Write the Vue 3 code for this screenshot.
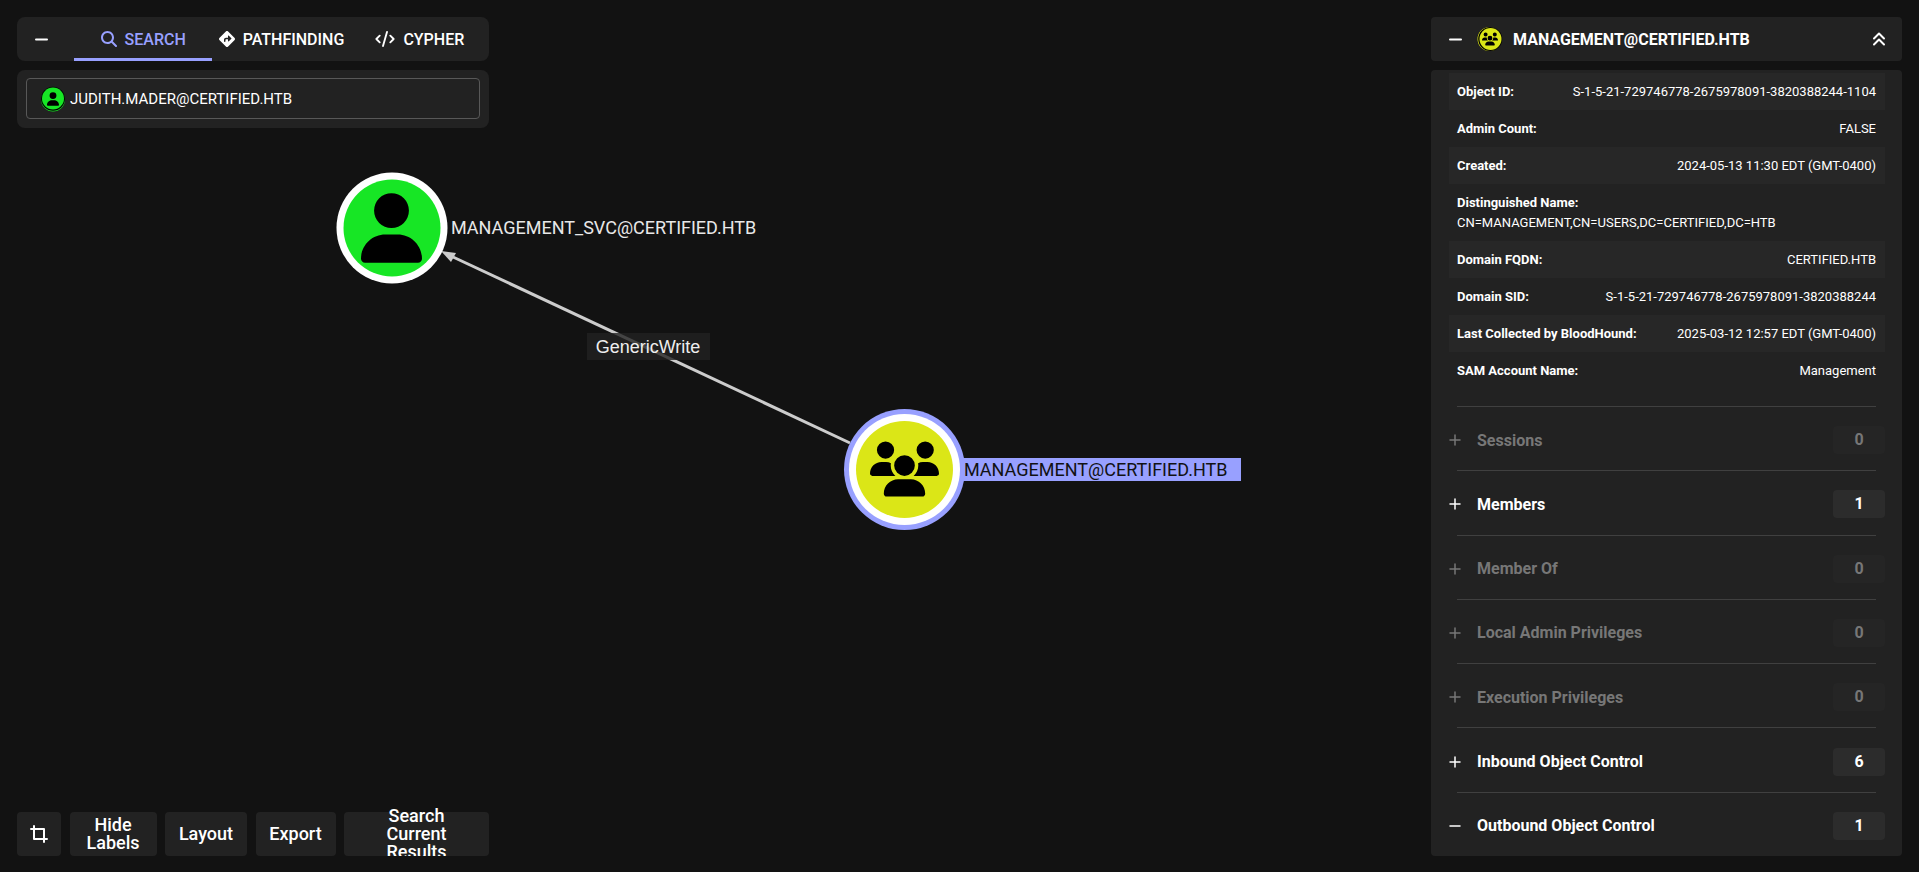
<script setup>
import { ref } from 'vue'

const principal = ref('JUDITH.MADER@CERTIFIED.HTB')

const properties = [
  { label: 'Object ID:', value: 'S-1-5-21-729746778-2675978091-3820388244-1104' },
  { label: 'Admin Count:', value: 'FALSE' },
  { label: 'Created:', value: '2024-05-13 11:30 EDT (GMT-0400)' },
  { label: 'Distinguished Name:', value: 'CN=MANAGEMENT,CN=USERS,DC=CERTIFIED,DC=HTB', wide: true },
  { label: 'Domain FQDN:', value: 'CERTIFIED.HTB' },
  { label: 'Domain SID:', value: 'S-1-5-21-729746778-2675978091-3820388244' },
  { label: 'Last Collected by BloodHound:', value: '2025-03-12 12:57 EDT (GMT-0400)' },
  { label: 'SAM Account Name:', value: 'Management' },
]

const sections = ref([
  { name: 'Sessions', count: 0, open: false },
  { name: 'Members', count: 1, open: false },
  { name: 'Member Of', count: 0, open: false },
  { name: 'Local Admin Privileges', count: 0, open: false },
  { name: 'Execution Privileges', count: 0, open: false },
  { name: 'Inbound Object Control', count: 6, open: false },
  { name: 'Outbound Object Control', count: 1, open: true },
])
</script>

<template>
  <div class="explore">
    <svg class="graph" role="img" aria-label="Graph">
      <defs>
        <symbol id="glyph-user" viewBox="0 0 448 512">
          <path d="M224 256A128 128 0 1 0 224 0a128 128 0 1 0 0 256zm-45.700 48C79.800 304 0 383.800 0 482.300 0 498.700 13.300 512 29.700 512h388.600c16.400 0 29.700-13.300 29.700-29.700C448 383.800 368.200 304 269.700 304z" />
        </symbol>
        <symbol id="glyph-users" viewBox="0 0 640 512">
          <path d="M144 0a80 80 0 1 1 0 160A80 80 0 1 1 144 0zM512 0a80 80 0 1 1 0 160A80 80 0 1 1 512 0zM0 298.700C0 239.800 47.800 192 106.700 192h42.700c15.900 0 31 3.500 44.600 9.700-1.300 7.200-1.900 14.700-1.900 22.300 0 38.200 16.800 72.500 43.300 96H21.300C9.600 320 0 310.400 0 298.700zM405.300 320h-.7c26.600-23.500 43.300-57.800 43.300-96 0-7.600-.7-15-1.900-22.300 13.600-6.300 28.700-9.700 44.600-9.700h42.700C592.200 192 640 239.800 640 298.700c0 11.800-9.600 21.300-21.300 21.300zM224 224a96 96 0 1 1 192 0 96 96 0 1 1-192 0zM128 485.300C128 411.700 187.700 352 261.300 352h117.400C452.300 352 512 411.700 512 485.300c0 14.700-11.900 26.700-26.700 26.700H154.700c-14.700 0-26.700-11.900-26.700-26.700z" />
        </symbol>
      </defs>
      <line class="edge" x1="850" y1="443" x2="453" y2="257" />
      <polygon class="arrow" points="441,251 456,253 451,262" />

      <circle cx="392" cy="228" r="55.5" fill="#fff" />
      <circle cx="392" cy="228" r="48.5" fill="#17e625" />
      <use href="#glyph-user" x="361" y="193" width="61" height="70" />
      <text class="label" x="451" y="234">MANAGEMENT_SVC@CERTIFIED.HTB</text>

      <rect class="edge-box" x="587" y="333" width="123" height="27" />
      <text class="edge-label" x="648" y="353">GenericWrite</text>

      <rect x="950" y="458" width="291" height="23" fill="#98a0ff" />
      <circle cx="904.5" cy="469.5" r="60.5" fill="#98a0ff" />
      <circle cx="904.5" cy="469.5" r="55.5" fill="#fff" />
      <circle cx="904.5" cy="469.5" r="48.5" fill="#dbe617" />
      <use href="#glyph-users" x="870" y="441" width="69" height="56" />
      <text class="label selected" x="964" y="476">MANAGEMENT@CERTIFIED.HTB</text>
    </svg>

    <div class="left">
      <div class="top">
        <div class="panel tabs">
          <button class="collapse" aria-label="Collapse search">
            <svg width="13" height="13" viewBox="0 0 13 13"><path d="M1 6.500h11" stroke="currentColor" stroke-width="2" stroke-linecap="round" /></svg>
          </button>
          <div class="tablist" role="tablist">
            <button class="tab active" role="tab" aria-selected="true">
              <svg width="16" height="16" viewBox="0 0 512 512"><path fill="currentColor" d="M416 208c0 45.900-14.900 88.300-40 122.700l126.600 126.700c12.500 12.500 12.500 32.800 0 45.300s-32.800 12.500-45.300 0L330.700 376C296.300 401.200 253.900 416 208 416 93.100 416 0 322.900 0 208S93.100 0 208 0s208 93.100 208 208zM208 352a144 144 0 1 0 0-288 144 144 0 1 0 0 288z" /></svg>
              SEARCH
            </button>
            <button class="tab" role="tab" aria-selected="false">
              <svg width="16" height="16" viewBox="0 0 512 512"><path fill="currentColor" fill-rule="evenodd" d="M227.700 11.700c15.600-15.600 40.900-15.600 56.600 0l216 216c15.600 15.600 15.600 40.900 0 56.600l-216 216c-15.600 15.600-40.900 15.600-56.600 0l-216-216c-15.600-15.600-15.600-40.900 0-56.600zm87.600 137c-4.600-4.600-11.500-5.900-17.400-3.500s-9.900 8.300-9.900 14.800v56h-64c-35.300 0-64 28.700-64 64v48c0 13.300 10.700 24 24 24s24-10.700 24-24v-48c0-8.800 7.200-16 16-16h64v56c0 6.500 3.900 12.300 9.900 14.800s12.900 1.100 17.400-3.500l80-80c6.200-6.200 6.200-16.400 0-22.600z" /></svg>
              PATHFINDING
            </button>
            <button class="tab" role="tab" aria-selected="false">
              <svg width="20" height="16" viewBox="0 0 640 512"><path fill="none" stroke="currentColor" stroke-width="60" stroke-linecap="round" stroke-linejoin="round" d="M150 150 44 256l106 106M490 150l106 106-106 106M384 32 256 480" /></svg>
              CYPHER
            </button>
          </div>
        </div>
        <div class="panel search">
          <label class="field">
            <svg class="kind" width="26" height="26" viewBox="0 0 26 26">
              <circle cx="13" cy="13.500" r="12" fill="#17e625" />
              <circle cx="13" cy="12.800" r="12" fill="#000" />
              <circle cx="13" cy="12.500" r="11" fill="#17e625" />
              <use href="#glyph-user" x="7" y="6" width="12" height="14" />
            </svg>
            <input v-model="principal" aria-label="Search nodes" />
          </label>
        </div>
      </div>

      <div class="toolbar">
        <button class="tool crop" aria-label="Reset view">
          <svg width="18" height="18" viewBox="0 0 18 18"><path fill="none" stroke="currentColor" stroke-width="2" stroke-linecap="round" stroke-linejoin="round" d="M1 4h13v13M4 1v13h13" /></svg>
        </button>
        <button class="tool hide">Hide Labels</button>
        <button class="tool layout">Layout</button>
        <button class="tool export">Export</button>
        <button class="tool results"><span>Search Current Results</span></button>
      </div>
    </div>

    <aside class="right">
      <header class="panel entity">
        <button aria-label="Collapse panel">
          <svg width="13" height="13" viewBox="0 0 13 13"><path d="M1 6.500h11" stroke="currentColor" stroke-width="2" stroke-linecap="round" /></svg>
        </button>
        <svg class="kind" width="26" height="26" viewBox="0 0 26 26">
          <circle cx="12.500" cy="13" r="12" fill="#dbe617" />
          <circle cx="13.200" cy="13" r="12" fill="#000" />
          <circle cx="13.500" cy="13" r="11" fill="#dbe617" />
          <use href="#glyph-users" x="5" y="6" width="16" height="14" />
        </svg>
        <h1>MANAGEMENT@CERTIFIED.HTB</h1>
        <button aria-label="Collapse all sections">
          <svg width="14" height="14" viewBox="0 0 14 14"><path fill="none" stroke="currentColor" stroke-width="2" stroke-linecap="round" stroke-linejoin="round" d="M2 6.500 7 1.500l5 5M2 12.500l5-5 5 5" /></svg>
        </button>
      </header>

      <div class="panel body">
        <dl>
          <div v-for="p in properties" :key="p.label" class="row" :class="{ wide: p.wide }">
            <dt>{{ p.label }}</dt>
            <dd>{{ p.value }}</dd>
          </div>
        </dl>
        <div class="sections">
          <button
            v-for="s in sections"
            :key="s.name"
            class="section"
            :disabled="s.count === 0"
            :aria-expanded="s.open"
            @click="s.open = !s.open"
          >
            <svg width="12" height="12" viewBox="0 0 12 12"><path :d="s.open ? 'M1 6h10' : 'M1 6h10M6 1v10'" stroke="currentColor" stroke-width="1.500" stroke-linecap="round" /></svg>
            <span class="name">{{ s.name }}</span>
            <span class="count">{{ s.count }}</span>
          </button>
        </div>
      </div>
    </aside>
  </div>
</template>

<style>
body {
  margin: 0;
  background: #121212;
}
</style>

<style scoped>
* {
  box-sizing: border-box;
}
.explore {
  position: relative;
  display: flex;
  justify-content: space-between;
  height: 100vh;
  padding: 17px 17px 16px;
  overflow: hidden;
  background: #121212;
  color: #fff;
  font-family: Roboto, "Liberation Sans", sans-serif;
}
button {
  display: flex;
  align-items: center;
  padding: 0;
  border: 0;
  background: none;
  color: inherit;
  font: inherit;
  cursor: pointer;
}
svg {
  flex: none;
}
.graph {
  position: absolute;
  inset: 0;
  width: 100%;
  height: 100%;
}
.edge {
  stroke: #ccc;
  stroke-width: 3;
}
.arrow {
  fill: #ccc;
}
.label {
  fill: #e8e8e8;
  font-size: 18px;
}
.label.selected {
  fill: #121212;
}
.edge-box {
  fill: #222;
  fill-opacity: 0.8;
}
.edge-label {
  fill: #eee;
  font-family: "Liberation Sans", Arial, sans-serif;
  font-size: 18px;
  text-anchor: middle;
}
.left,
.right {
  position: relative;
  display: flex;
  flex-direction: column;
}
.left {
  width: 472px;
  justify-content: space-between;
}
.right {
  width: 471px;
  gap: 9px;
}
.top {
  display: flex;
  flex-direction: column;
  gap: 9px;
}
.panel {
  border-radius: 8px;
  background: #222;
}
.right .panel {
  border-radius: 4px;
}
.tabs {
  display: flex;
  height: 44px;
}
.collapse {
  width: 57px;
  padding-left: 18px;
}
.tablist {
  display: grid;
  flex: 1;
  grid-template-columns: repeat(3, 1fr);
}
.tab {
  justify-content: center;
  gap: 8px;
  font-size: 16px;
  font-weight: 500;
}
.tab.active {
  color: #98a0ff;
  box-shadow: inset 0 -3px #98a0ff;
}
.search {
  padding: 8px 9px 9px;
}
.field {
  display: flex;
  align-items: center;
  gap: 4px;
  height: 41px;
  padding: 0 13px;
  border: 1px solid #585858;
  border-radius: 4px;
}
.field input {
  flex: 1;
  min-width: 0;
  padding: 0;
  border: 0;
  outline: 0;
  background: none;
  color: #fff;
  font: 15px Roboto, "Liberation Sans", sans-serif;
}
.toolbar {
  display: flex;
  justify-content: space-between;
}
.tool {
  justify-content: center;
  height: 44px;
  overflow: hidden;
  border-radius: 4px;
  background: #222;
  font-size: 18px;
  font-weight: 500;
  line-height: 18px;
  text-align: center;
}
.crop {
  width: 44px;
}
.hide {
  width: 87px;
  padding: 0 12px;
}
.layout {
  width: 82px;
}
.export {
  width: 80px;
}
.results {
  width: 145px;
  padding: 0 36px;
  overflow: visible;
  clip-path: inset(-10px 0 0 0);
}
.entity {
  display: flex;
  align-items: center;
  height: 44px;
  padding: 0 16px 0 18px;
}
.entity .kind {
  margin: 0 10px 0 15px;
}
h1 {
  flex: 1;
  margin: 0;
  font-size: 16px;
  font-weight: 700;
}
.body {
  display: flex;
  flex: 1;
  flex-direction: column;
  min-height: 0;
  padding: 3px 17px 0 18px;
  overflow: hidden;
}
dl {
  margin: 0 0 17px;
  font-size: 13px;
  line-height: 20px;
}
.row {
  display: flex;
  justify-content: space-between;
  padding: 9px 9px 8px 8px;
}
.row.wide {
  display: block;
}
.row:nth-child(odd) {
  background: #272727;
}
dt {
  font-weight: 700;
}
dd {
  margin: 0;
}
.sections {
  display: flex;
  flex: 1;
  flex-direction: column;
}
.section {
  flex: 1;
  min-height: 64px;
  padding-top: 4px;
  background: linear-gradient(#404040, #404040) 8px 0 / calc(100% - 17px) 1px no-repeat;
  font-size: 16px;
  font-weight: 700;
  text-align: left;
}
.section:disabled {
  color: #777;
}
.name {
  flex: 1;
  margin-left: 16px;
}
.count {
  width: 52px;
  border-radius: 4px;
  background: #2c2c2c;
  line-height: 28px;
  text-align: center;
}
.section:disabled .count {
  background: #252525;
}
</style>
